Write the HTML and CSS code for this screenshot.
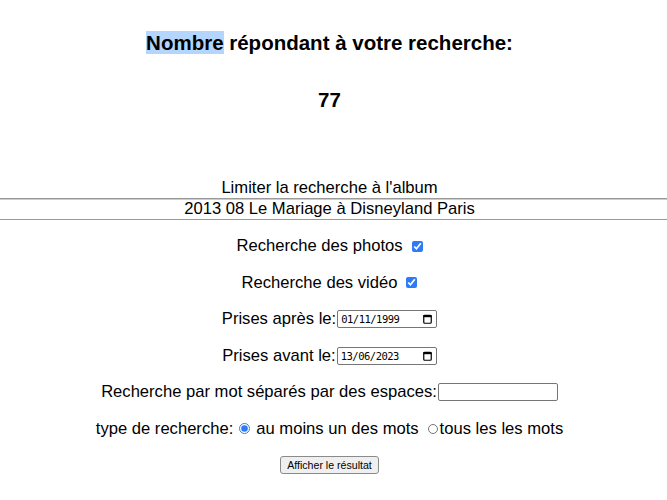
FILE: index.html
```html
<!DOCTYPE html>
<html>
<head>
    <title>Recherche</title>
    <link rel="stylesheet" href="styles.css">
</head>
<body>
    <div class="result-head">
        <h2><span class="selected">Nombre</span> répondant à votre recherche:</h2>
        <h2 class="count">77</h2>
    </div>
    <form class="search">
        <div class="album">
            <div class="album-label">Limiter la recherche à l'album</div>
            <div class="album-name">2013 08 Le Mariage à Disneyland Paris</div>
        </div>
        <div class="row first">
            <label for="photos">Recherche des photos</label>
            <input type="checkbox" id="photos" class="check" checked>
        </div>
        <div class="row">
            <label for="videos">Recherche des vidéo</label>
            <input type="checkbox" id="videos" class="check" checked>
        </div>
        <div class="row">
            <label for="after">Prises après le:</label>
            <span class="date">
                <input type="text" id="after" class="date-text" value="01/11/1999">
                <svg class="cal" width="9" height="10" viewBox="0 0 9 10"><rect x="0.75" y="1.25" width="7.5" height="8" rx="1" fill="none" stroke="#000" stroke-width="1.2"/><rect x="0.5" y="1" width="8" height="2.2" fill="#000"/></svg>
            </span>
        </div>
        <div class="row">
            <label for="before">Prises avant le:</label>
            <span class="date">
                <input type="text" id="before" class="date-text" value="13/06/2023">
                <svg class="cal" width="9" height="10" viewBox="0 0 9 10"><rect x="0.75" y="1.25" width="7.5" height="8" rx="1" fill="none" stroke="#000" stroke-width="1.2"/><rect x="0.5" y="1" width="8" height="2.2" fill="#000"/></svg>
            </span>
        </div>
        <div class="row">
            <label for="words">Recherche par mot séparés par des espaces:</label><input type="text" id="words" class="words">
        </div>
        <div class="row">
            <span>type de recherche:</span>
            <input type="radio" name="mode" id="any" class="radio" checked>
            <label for="any">au moins un des mots</label>
            <input type="radio" name="mode" id="all" class="radio radio-off"><label for="all">tous les les mots</label>
        </div>
        <div class="row">
            <button type="submit" class="submit">Afficher le résultat</button>
        </div>
    </form>
</body>
</html>
```

FILE: styles.css
```css
body {
    margin: 0;
    font-family: "Liberation Sans", Arial, sans-serif;
    font-size: 16.6px;
    color: #000;
    background-color: #fff;
}
.result-head {
    text-align: center;
    padding-top: 32px;
    padding-right: 8px;
}
h2 {
    font-size: 20.5px;
    line-height: 22px;
    margin: 0;
}
.count {
    margin-top: 35px;
}
.selected {
    background-color: #b4d5fe;
}
.search {
    margin-top: 66px;
}
.album {
    text-align: center;
}
.album-label {
    line-height: 21px;
    padding-right: 8px;
}
.album-name {
    line-height: 20px;
    padding-right: 8px;
    border-top: 1px solid #999;
    border-bottom: 1px solid #999;
    box-shadow: inset 0 1px 0 #ccc;
}
.row {
    height: 36.5px;
    padding-right: 8px;
    display: flex;
    align-items: center;
    justify-content: center;
}
.first {
    margin-top: 8px;
}
.check {
    width: 11px;
    height: 11px;
    margin: 0 0 0 9px;
    accent-color: #2f7bf5;
}
.date {
    width: 100px;
    height: 18px;
    box-sizing: border-box;
    margin-left: 1px;
    border: 1px solid #767676;
    border-radius: 2px;
    display: flex;
    align-items: center;
    padding: 0 4px 0 3px;
}
.date-text {
    flex: 1;
    min-width: 0;
    border: none;
    padding: 0;
    margin: 0;
    outline: none;
    font-family: "DejaVu Sans Mono", monospace;
    font-size: 10.5px;
    letter-spacing: -0.5px;
    color: #000;
}
.cal {
    flex: none;
}
.words {
    width: 120px;
    height: 18px;
    box-sizing: border-box;
    margin: 0 0 0 1px;
    border: 1px solid #767676;
    border-radius: 2px;
}
.radio {
    width: 11px;
    height: 11px;
    margin: 0 6px 0 6px;
    accent-color: #2f7bf5;
}
.radio-off {
    width: 10px;
    height: 10px;
    margin: 0 2px 0 9px;
}
.submit {
    font-family: "Liberation Sans", Arial, sans-serif;
    font-size: 10.6px;
    height: 18px;
    padding: 0 6px;
    background-color: #efefef;
    border: 1px solid #8a8a8a;
    border-radius: 3px;
    color: #000;
}
```
